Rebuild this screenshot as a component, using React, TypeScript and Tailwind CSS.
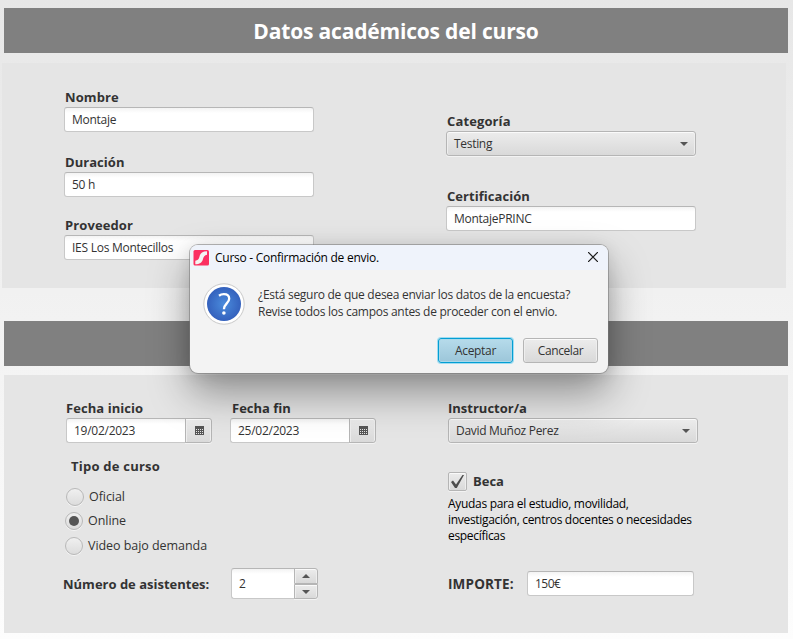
import type { ReactNode } from "react";

function Label({ children, className = "", size = "text-[13px]" }: { children: ReactNode; className?: string; size?: string }) {
  return (
    <div className={"h-5 whitespace-nowrap pl-px font-bold leading-5 text-[#333333] " + size + " " + className}>
      {children}
    </div>
  );
}

const inputLook =
  "rounded-[3px] border border-[#c8c8c8] border-t-[#b6b6b6] bg-[linear-gradient(#f3f3f3,#ffffff_5px)] text-[12px] text-[#333333]";
const buttonLook =
  "border border-[#b5b5b5] bg-[linear-gradient(#ececec,#d9d9d9)] shadow-[inset_0_1px_0_#fafafa,inset_1px_0_0_#eeeeee,inset_-1px_0_0_#eeeeee,0_1px_0_#f3f3f3]";

function TextInput({ value, className = "w-[250px]", tracking = "tracking-[-0.26px]" }: { value: string; className?: string; tracking?: string }) {
  return (
    <div className={"h-[25px] whitespace-nowrap pl-[7px] leading-[23px] " + inputLook + " " + tracking + " " + className}>
      {value}
    </div>
  );
}

function Combo({ value }: { value: string }) {
  return (
    <div className={"flex h-[25px] w-[250px] items-center justify-between rounded-[3px] pl-[7px] pr-[7px] text-[12px] leading-[23px] tracking-[-0.3px] text-[#333333] " + buttonLook}>
      <span>{value}</span>
      <svg width="8" height="4" viewBox="0 0 8 4"><path d="M0 0h8L4 4z" fill="#555" /></svg>
    </div>
  );
}

function DateInput({ label, value, labelClass }: { label: string; value: string; labelClass: string }) {
  return (
    <div className="w-[146px]">
      <Label className={labelClass}>{label}</Label>
      <div className="flex h-[25px]">
        <div className={"w-[120px] border-r-0 pl-[7px] leading-[23px] tracking-[-0.27px] " + inputLook + " rounded-r-none border-[#b5b5b5]"}>
          {value}
        </div>
        <div className={"-ml-px flex w-[27px] items-center justify-center rounded-r-[3px] pl-px " + buttonLook}>
          <svg width="9" height="9" viewBox="0 0 9 9" shapeRendering="crispEdges">
            <path d="M0 0h9v9H0z" fill="#555" />
            <path d="M1 3h1v1H1zM3 3h1v1H3zM5 3h1v1H5zM7 3h1v1H7zM1 5h1v1H1zM3 5h1v1H3zM5 5h1v1H5zM7 5h1v1H7zM1 7h1v1H1zM3 7h1v1H3zM5 7h1v1H5zM7 7h1v1H7z" fill="#e4e4e4" />
          </svg>
        </div>
      </div>
    </div>
  );
}

function Radio({ label, checked = false, className = "" }: { label: string; checked?: boolean; className?: string }) {
  return (
    <div className={"flex h-[18px] items-center gap-[5px] whitespace-nowrap text-[12.5px] tracking-[-0.05px] text-[#333333] " + className}>
      <span className="flex size-[18px] items-center justify-center rounded-full border border-[#b8b8b8] bg-[linear-gradient(#f0f0f0,#dcdcdc)] shadow-[0_1px_0_#f4f4f4]">
        {checked && <span className="size-[10px] rounded-full bg-[#555555]" />}
      </span>
      <span className="leading-[18px]">{label}</span>
    </div>
  );
}

function Banner({ children }: { children?: ReactNode }) {
  return (
    <div className="ml-[4px] h-[45px] w-[784px] bg-[#808080] text-center text-[21px] font-bold leading-[47px] tracking-[-0.18px] text-white">
      {children}
    </div>
  );
}

function Dialog() {
  return (
    <div className="absolute left-[190px] top-[245px] h-[128px] w-[418px] rounded-[8px] bg-[#f3f3f3] shadow-[0_0_0_1px_rgba(120,120,120,0.55),0_2px_16px_rgba(0,0,0,0.1),0_20px_40px_rgba(0,0,0,0.38)]">
      <div className="flex h-[25px] items-center rounded-t-[8px] bg-[#eff3fb] pl-[3px] pr-[10px]">
        <svg width="16" height="16" viewBox="0 0 16 16">
          <rect x="0.500" y="0" width="15.500" height="15.500" rx="1.500" fill="#fb2f63" />
          <path d="M14 1.200C9.500 1.200 7.200 3 6.500 6.500C6 9 4.800 10.300 2.300 10.800V14.300C6.500 14.300 9.300 12.500 10 9C10.500 6.500 11.500 5.200 14 4.700z" fill="#f3f3f3" />
        </svg>
        <span className="ml-[6px] flex-1 whitespace-nowrap text-[12px] leading-[25px] tracking-[-0.27px] text-black">Curso - Confirmación de envio.</span>
        <svg className="mb-[2px]" width="10" height="10" viewBox="0 0 10 10"><path d="M0 0l10 10M10 0L0 10" stroke="#1a1a1a" strokeWidth="1.2" /></svg>
      </div>
      <div className="flex pl-[13px] pt-[13px]">
        <svg width="42" height="42" viewBox="0 0 42 42">
          <defs>
            <radialGradient id="questionFill"><stop offset="0" stopColor="#4a8bdc" /><stop offset="1" stopColor="#3461bd" /></radialGradient>
          </defs>
          <circle cx="21" cy="21" r="20.200" fill="#fff" stroke="#c9c9c9" />
          <circle cx="21" cy="21" r="17" fill="url(#questionFill)" />
          <path d="M16 12.700C17.500 11.600 19 11.200 20.800 11.200C24.200 11.200 26.200 12.900 26.200 15.700C26.200 20.200 20.900 20.800 20.900 26.300" fill="none" stroke="#fff" strokeWidth="2.300" />
          <circle cx="20.900" cy="30" r="1.800" fill="#fff" />
        </svg>
        <div className="ml-[13px] whitespace-nowrap pt-[3px] text-[12px] leading-[17px] tracking-[-0.28px] text-[#333333]">
          <div>¿Está seguro de que desea enviar los datos de la encuesta?</div>
          <div>Revise todos los campos antes de proceder con el envio.</div>
        </div>
      </div>
      <div className="mt-[13px] flex justify-end gap-[10px] pr-[10px] text-[12px] leading-[23px] text-[#333333]">
        <div className="h-[25px] w-[75px] rounded-[3px] border border-[#039ed3] bg-[linear-gradient(#b6dbeb,#9cc6d9)] text-center leading-[24px] tracking-[-0.3px] shadow-[0_0_0_1px_#9fdcf1,inset_0_0_0_1px_#a9d8ea]">Aceptar</div>
        <div className={"h-[25px] w-[75px] rounded-[3px] text-center leading-[24px] tracking-[-0.4px] " + buttonLook}>Cancelar</div>
      </div>
    </div>
  );
}

export default function App() {
  return (
    <div className="relative h-[639px] w-[793px] overflow-hidden bg-[linear-gradient(#e7e7e7,#fdfdfd)] pt-2 font-['Open_Sans',sans-serif]">
      <Banner>Datos académicos del curso</Banner>
      <div className="ml-[2px] mt-[10px] flex h-[225px] w-[784px] bg-[#e5e5e5] pl-[62px]">
        <div className="w-[382px] pt-[24px]">
          <Label className="tracking-[0.1px]">Nombre</Label>
          <TextInput value="Montaje" />
          <Label className="mt-5 tracking-[0.05px]">Duración</Label>
          <TextInput value="50 h" />
          <Label className="mt-[18px] tracking-[0.1px]">Proveedor</Label>
          <TextInput value="IES Los Montecillos" />
        </div>
        <div className="pt-[48px]">
          <Label className="tracking-[0.12px]">Categoría</Label>
          <Combo value="Testing" />
          <Label className="mt-[30px] tracking-[0.05px]">Certificación</Label>
          <TextInput value="MontajePRINC" />
        </div>
      </div>
      <div className="mt-[33px]"><Banner /></div>
      <div className="ml-[4px] mt-[9px] flex h-[258px] w-[784px] bg-[#e5e5e5] pt-[23px]">
        <div className="w-[444px]">
          <div className="flex gap-[18px] pl-[62px]">
            <DateInput label="Fecha inicio" value="19/02/2023" labelClass="-ml-px tracking-[0.06px]" />
            <DateInput label="Fecha fin" value="25/02/2023" labelClass="ml-px" />
          </div>
          <Label className="ml-[66px] mt-[13px] tracking-[0.23px]">Tipo de curso</Label>
          <Radio className="ml-[62px] mt-[12px]" label="Oficial" />
          <Radio className="ml-[61px] mt-[6px]" label="Online" checked />
          <Radio className="ml-[61px] mt-[7px]" label="Video bajo demanda" />
          <div className="mt-[13px] flex h-[31px] items-center pl-[58px]">
            <Label className="w-[169px]">Número de asistentes:</Label>
            <div className={"h-[31px] w-[64px] border-r-0 pl-[7px] leading-[29px] " + inputLook + " rounded-r-none"}>2</div>
            <div className="-ml-px flex w-[24px] flex-col">
              <div className={"flex h-4 items-center justify-center rounded-tr-[3px] " + buttonLook}>
                <svg width="8" height="4" viewBox="0 0 8 4"><path d="M0 4h8L4 0z" fill="#555" /></svg>
              </div>
              <div className={"flex h-[15px] items-center justify-center rounded-br-[3px] " + buttonLook}>
                <svg width="8" height="4" viewBox="0 0 8 4"><path d="M0 0h8L4 4z" fill="#555" /></svg>
              </div>
            </div>
          </div>
        </div>
        <div className="w-[260px]">
          <Label className="-ml-px">Instructor/a</Label>
          <Combo value="David Muñoz Perez" />
          <div className="mt-[29px] flex h-[19px] items-center">
            <div className={"flex size-[19px] items-center justify-center rounded-[2px] " + buttonLook}>
              <svg width="13" height="13" viewBox="0 0 13 13"><path d="M0 7L2 5.500 5 9.500 11.500 0H13L5.800 13H4z" fill="#4d4d4d" /></svg>
            </div>
            <Label className="mb-[2px] ml-[5px]">Beca</Label>
          </div>
          <div className="mt-[5px] whitespace-nowrap text-[12px] leading-4 tracking-[-0.31px] text-black">
            <div>Ayudas para el estudio, movilidad,</div>
            <div>investigación, centros docentes o necesidades</div>
            <div>específicas</div>
          </div>
          <div className="mt-[27px] flex h-[25px] items-center">
            <Label className="-ml-px w-20 tracking-[0.15px]" size="text-[13.5px]">IMPORTE:</Label>
            <TextInput value="150€" className="w-[167px]" tracking="tracking-[-0.5px]" />
          </div>
        </div>
      </div>
      <Dialog />
    </div>
  );
}
